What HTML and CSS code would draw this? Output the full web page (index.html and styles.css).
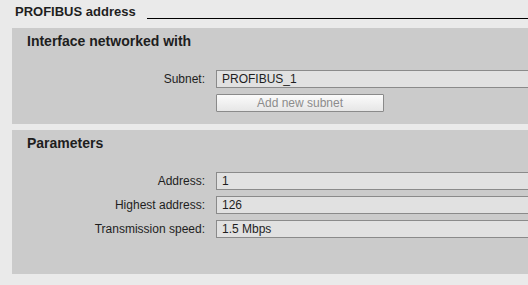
FILE: index.html
```html
<html lang="en">

<head>
  <meta charset="UTF-8">
  <meta name="viewport" content="width=device-width, initial-scale=1.0">
  <title>PROFIBUS address</title>
  <link rel="stylesheet" href="styles.css">
</head>

<body>
  <div class="section-title">
    <span class="title-text">PROFIBUS address</span>
    <span class="title-line"></span>
  </div>

  <div class="panel panel-interface">
    <p class="panel-heading">Interface networked with</p>
    <div class="form-row">
      <label class="field-label">Subnet:</label>
      <div class="field-box">PROFIBUS_1</div>
    </div>
    <div class="form-row">
      <span class="field-label"></span>
      <button class="subnet-button">Add new subnet</button>
    </div>
  </div>

  <div class="panel panel-params">
    <p class="panel-heading">Parameters</p>
    <div class="form-row">
      <label class="field-label">Address:</label>
      <div class="field-box">1</div>
    </div>
    <div class="form-row">
      <label class="field-label">Highest address:</label>
      <div class="field-box">126</div>
    </div>
    <div class="form-row">
      <label class="field-label">Transmission speed:</label>
      <div class="field-box">1.5 Mbps</div>
    </div>
  </div>
</body>

</html>
```

FILE: styles.css
```css
body {
  margin: 0;
  background-color: #eaeaea;
  font-family: "Liberation Sans", Arial, sans-serif;
  color: #1e1e1e;
  overflow: hidden;
}

.section-title {
  display: flex;
  align-items: flex-start;
  height: 28px;
  padding: 4px 0 0 15px;
  box-sizing: border-box;
}

.title-text {
  font-size: 13px;
  line-height: 16px;
  font-weight: bold;
  margin-right: 11px;
}

.title-line {
  flex: 1;
  height: 14px;
  border-bottom: 1px solid #000;
}

.panel {
  margin-left: 12px;
  margin-right: -20px;
  background-color: #cbcbcb;
  box-sizing: border-box;
  padding-top: 5px;
}

.panel-interface {
  height: 96px;
}

.panel-params {
  margin-top: 6px;
  height: 144px;
}

.panel-heading {
  margin: 0 0 0 15px;
  font-size: 14px;
  line-height: 16px;
  font-weight: bold;
  height: 37px;
}

.form-row {
  display: flex;
  align-items: center;
  margin-bottom: 6px;
}

.field-label {
  width: 193px;
  text-align: right;
  font-size: 12px;
  margin-right: 11px;
  flex-shrink: 0;
}

.field-box {
  flex: 1;
  height: 18px;
  box-sizing: border-box;
  border: 1px solid #8a8a8a;
  border-right: none;
  background-color: #e1e1e1;
  font-size: 12px;
  line-height: 16px;
  padding-left: 5px;
}

.subnet-button {
  width: 168px;
  height: 18px;
  padding: 0;
  border: 1px solid #8a8a8a;
  border-radius: 1px;
  background: linear-gradient(#fbfbfb, #e6e6e6);
  color: #8c8c8c;
  font-family: "Liberation Sans", Arial, sans-serif;
  font-size: 12px;
}
```
